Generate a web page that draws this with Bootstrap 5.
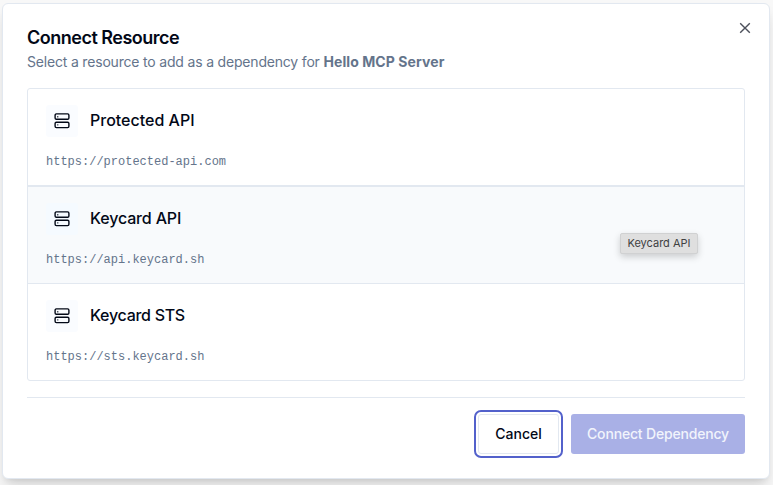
<!DOCTYPE html>
<html lang="en">
<head>
<meta charset="utf-8">
<meta name="viewport" content="width=device-width, initial-scale=1">
<title>Connect Resource</title>
<link href="https://cdn.jsdelivr.net/npm/bootstrap@5.3.0/dist/css/bootstrap.min.css" rel="stylesheet">
<style>
body{font-family:Inter,"Liberation Sans",sans-serif;background:#f8f8f8;color:#020817;height:485px;overflow:hidden;padding:3px 3px 6px 2px}
.dialog-box{height:476px;border:1px solid #e2e8f0;border-radius:6px;padding:21px 24px 24px;box-shadow:0 10px 15px -3px rgba(0,0,0,.14),0 4px 6px -4px rgba(0,0,0,.12)}
.dialog-title{font-size:18px;line-height:24px;font-weight:600;letter-spacing:-.5px}
.dialog-title span{position:relative;top:1px}
.dialog-note{font-size:14px;line-height:20px;margin-top:3px;color:#64748b;letter-spacing:-.185px}
.dialog-note strong{font-weight:700;letter-spacing:.08px}
.close-x{top:18px;right:18px;width:12px;height:12px;line-height:0;color:#4c505b}
.resources{margin-top:16px;border:1px solid #e2e8f0;border-radius:3px;overflow:hidden}
.resource{height:97px;padding:16px 18px;border-bottom:1px solid #e2e8f0}
.resource:first-child{height:98px;border-bottom-width:2px}
.resource:last-child{height:96px;border-bottom:0}
.resource.hovered{background:#f8fafc}
.res-icon{width:32px;height:32px;border-radius:3px;background:#fafcff}
.hovered .res-icon{background:#f5faff}
.res-name{font-size:16px;line-height:24px;font-weight:500;margin-left:12px;margin-top:-2px}
.hovered .res-name{letter-spacing:-.15px}
.resource:last-child .res-name{letter-spacing:-.28px}
.res-url{font-family:"Liberation Mono",monospace;font-size:12px;line-height:16px;margin-top:17px;color:#64748b}
.hint{left:620px;top:233px;width:78px;height:21px;font-size:11px;line-height:19px;color:#404142;background:#dfdfdf;border:1px solid #d0d1d2;border-radius:2px;box-shadow:0 3px 7px rgba(0,0,0,.18)}
.actions{margin-top:16px;padding-top:16px;border-top:1px solid #e2e8f0;gap:12px}
.actions .btn{height:40px;border-radius:3px;font-size:14px;line-height:20px;font-weight:500;padding:0}
.btn-cancel,.btn-cancel:hover{width:81px;background:#fff;color:#020817;border:1px solid #e2e8f0;outline:2px solid #5361cb;outline-offset:2px}
.actions .btn-connect:disabled{width:174px;background:#a9b0e6;color:#f1f4fc;border:0;opacity:1;letter-spacing:-.18px}
</style>
</head>
<body>
<main class="dialog-box bg-white position-relative" role="dialog">
  <h1 class="dialog-title mb-0"><span>Connect Resource</span></h1>
  <p class="dialog-note mb-0">Select a resource to add as a dependency for <strong>Hello MCP Server</strong></p>
  <button class="close-x position-absolute border-0 bg-transparent p-0" aria-label="Close"><svg width="12" height="12" viewBox="0 0 12 12" fill="none" stroke="currentColor" stroke-width="1.4"><path d="m1.2 1.2 9.6 9.6m0-9.6-9.6 9.6"/></svg></button>
  <svg class="d-none"><symbol id="server" viewBox="0 0 16 16"><g fill="none" stroke="#020817" stroke-width="1.4"><rect x="1.1" y=".9" width="13.8" height="5.4" rx="1.3"/><rect x="1.1" y="9.2" width="13.8" height="5.4" rx="1.3"/></g><path fill="#020817" fill-opacity=".7" d="M3 3h1.4v1.4H3zM3 11.2h1.4v1.4H3z"/></symbol></svg>
  <div class="resources">
    <div class="resource">
      <div class="d-flex align-items-center"><span class="res-icon d-flex align-items-center justify-content-center"><svg width="16" height="16"><use href="#server"/></svg></span><span class="res-name">Protected API</span></div>
      <div class="res-url">https://protected-api.com</div>
    </div>
    <div class="resource hovered">
      <div class="d-flex align-items-center"><span class="res-icon d-flex align-items-center justify-content-center"><svg width="16" height="16"><use href="#server"/></svg></span><span class="res-name">Keycard API</span></div>
      <div class="res-url">https://api.keycard.sh</div>
    </div>
    <div class="resource">
      <div class="d-flex align-items-center"><span class="res-icon d-flex align-items-center justify-content-center"><svg width="16" height="16"><use href="#server"/></svg></span><span class="res-name">Keycard STS</span></div>
      <div class="res-url">https://sts.keycard.sh</div>
    </div>
  </div>
  <div class="actions d-flex justify-content-end">
    <button class="btn btn-cancel">Cancel</button>
    <button class="btn btn-connect" disabled>Connect Dependency</button>
  </div>
</main>
<div class="hint position-absolute text-center text-nowrap">Keycard API</div>
<script src="https://cdn.jsdelivr.net/npm/bootstrap@5.3.0/dist/js/bootstrap.bundle.min.js"></script>
</body>
</html>
